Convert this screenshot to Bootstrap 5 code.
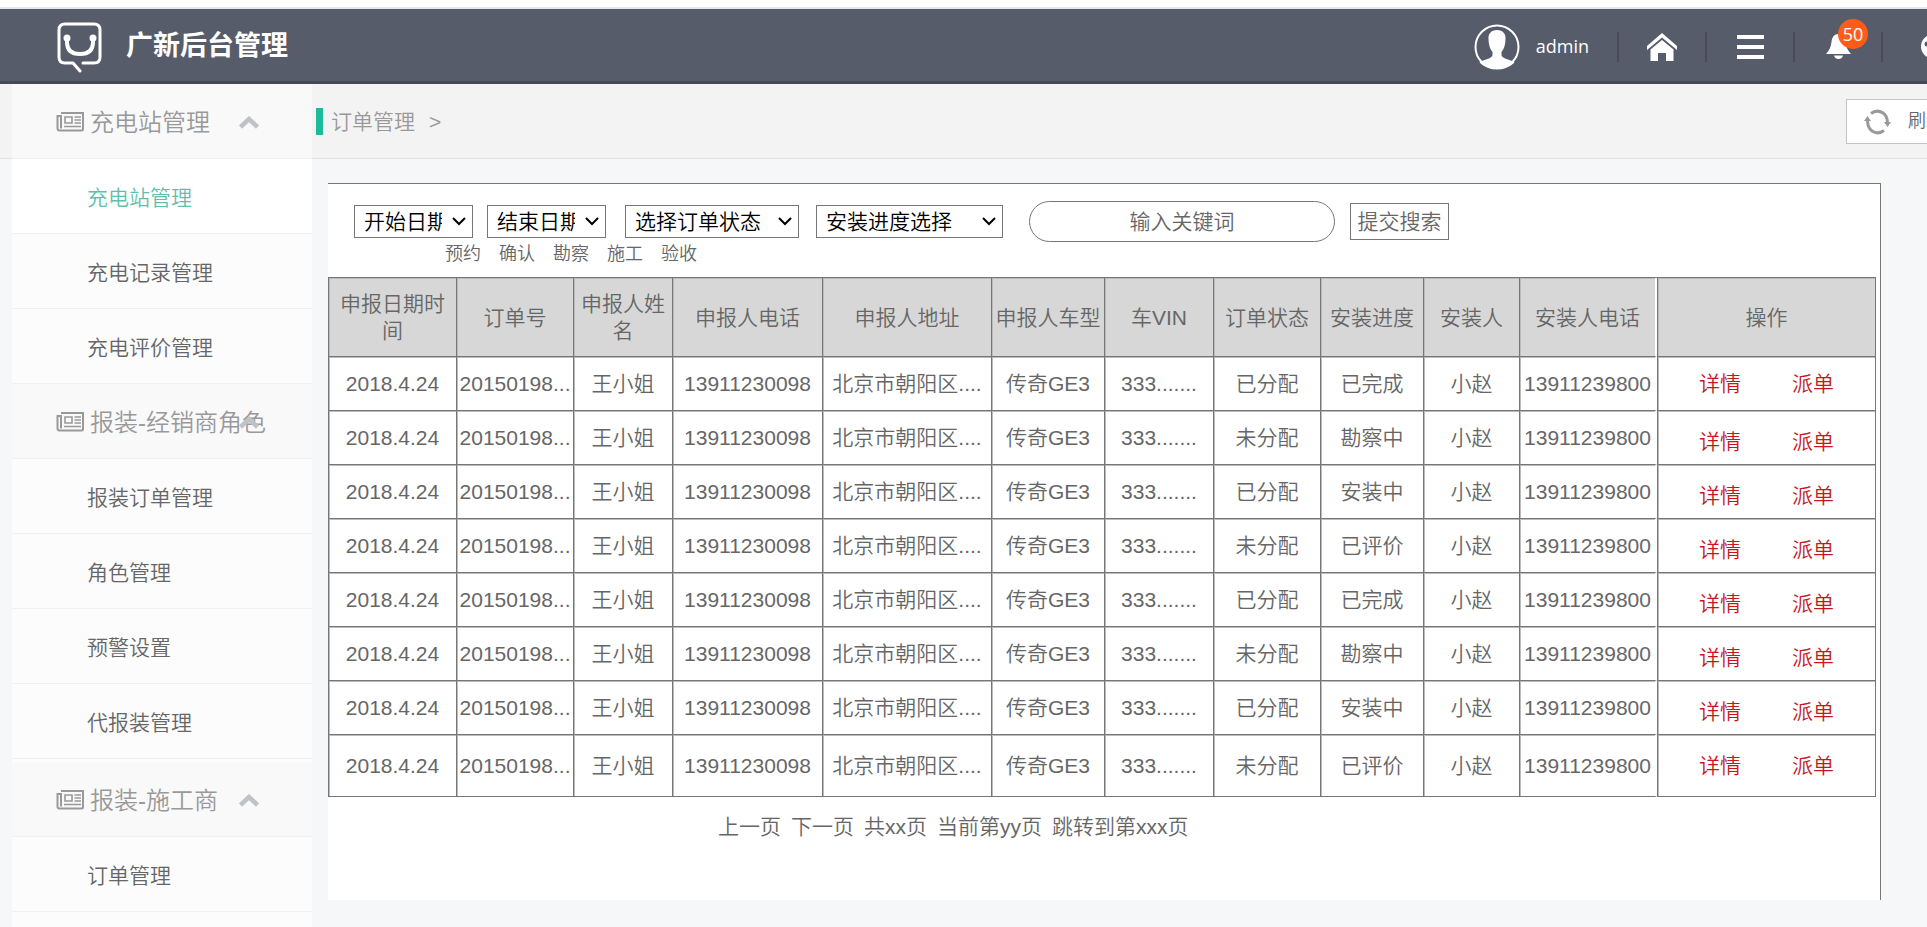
<!DOCTYPE html>
<html lang="zh-CN">
<head>
<meta charset="utf-8">
<meta name="viewport" content="width=device-width, initial-scale=1">
<title>广新后台管理</title>
<link href="https://cdn.jsdelivr.net/npm/bootstrap@5.3.0/dist/css/bootstrap.min.css" rel="stylesheet">
<style>
  body { font-family: "Liberation Sans", "Noto Sans CJK SC", sans-serif; font-weight: 350; font-size: 21px; line-height: 27px; color: #666; background: #f6f7f9; }
  a { color: inherit; text-decoration: none; }

  /* top bar */
  .page-edge { height: 9px; background: #fff; border-bottom: 2px solid #e6e8ed; }
  .topbar { height: 75px; padding-top: 3px; background: #575c6a; border-bottom: 3px solid #454956; color: #fff; }
  .brand-logo { margin-left: 56px; }
  .brand-name { font-size: 27px; font-weight: 700; margin-left: 23px; }
  .user-link { font-family: "Open Sans", "Noto Sans", sans-serif; font-weight: 400; font-size: 18px; gap: 16px; margin-right: 28px; }
  .tool { width: 88px; height: 30px; border-left: 2px solid #484b59; }
  .tool-last { width: 46px; padding-left: 37px; }
  .tool .count { left: 43px; top: -13px; width: 30px; height: 30px; border-radius: 50%; background: #ff5c1a; font-family: "Open Sans", "Noto Sans", sans-serif; font-weight: 400; font-size: 18px; line-height: 30px; }

  /* page body: crumb strip runs behind the sidebar */
  .shell { background: linear-gradient(#f3f3f3 74px, #e2e2e2 74px, #e2e2e2 75px, #f6f7f9 75px); padding-left: 12px; }
  .sidebar { width: 300px; background: #fcfcfc; }
  .side-group, .side-link { height: 75px; border-bottom: 1px solid #f0f0f0; padding-top: 2px; }
  .side-group { background: #f9f9f9; color: #999; font-size: 24px; padding-left: 44px; gap: 5px; border-radius: 0; }
  .side-group.spaced { margin-top: 3px; }
  .side-group .fold { right: 53px; top: 32px; }
  .side-link { padding-left: 75px; }
  .side-link.active { background: #fff; color: #5fbfab; }

  .crumbs { height: 75px; padding-left: 4px; color: #999; }
  .crumbs .accent { width: 7px; height: 27px; background: #1abc9c; margin-right: 8px; }
  .crumbs a { margin-right: 14px; }
  .refresh { width: 118px; height: 45px; margin-right: -37px; padding-left: 17px; gap: 17px; border: 1px solid #c4c4c4; background: #fff; color: #666; font-size: 18px; font-weight: 350; }

  .panel { margin: 24px 46px 27px 16px; background: #fff; border-top: 1px solid #767676; border-right: 1px solid #767676; }
  .filters { padding: 17px 26px 0; }
  .pick { appearance: none; height: 33px; border: 1px solid #767676; border-radius: 0; color: #000; font-weight: 350; padding: 0 30px 0 9px;
    background: #fff url("data:image/svg+xml,%3Csvg xmlns='http://www.w3.org/2000/svg' width='14' height='9'%3E%3Cpath d='M1 1l6 6 6-6' fill='none' stroke='%23000' stroke-width='2'/%3E%3C/svg%3E") no-repeat right 6px center; }
  .pick-date { width: 119px; margin-right: 14px; }
  .pick-state { width: 174px; margin: 0 17px 0 5px; }
  .pick-step { width: 187px; margin-right: 26px; }
  .keyword { width: 306px; height: 41px; border: 1px solid #767676; border-radius: 21px; text-align: center; color: #666; font-weight: 350; margin-right: 15px; }
  .keyword::placeholder { color: #666; opacity: 1; }
  .search { width: 99px; height: 37px; padding: 0; border: 1px solid #767676; background: #fff; color: #666; font-weight: 350; }
  .stages { padding-left: 117px; gap: 18px; font-size: 18px; line-height: 25px; }

  .orders { margin: 10px 6px 0 0; }
  .orders table { table-layout: fixed; border-collapse: separate; border-spacing: 0; border-top: 1px solid #767676; border-right: 1px solid #767676; }
  .orders th, .orders td { height: 54px; padding: 0; text-align: center; vertical-align: middle; font-weight: 350; white-space: nowrap; border-left: 1px solid #767676; border-bottom: 1px solid #767676; box-shadow: inset 1px 1px 0 #bbb; }
  .orders th { height: 79px; padding: 0 2px; background: #d7d7d7; white-space: normal; }
  .orders tr > :nth-child(11) { border-right: 2px solid #fff; }
  .orders tbody tr:last-child td { height: 62px; }
  .orders tbody tr:not(:first-child):not(:last-child) .acts { padding-top: 8px; }
  .acts a { color: #c8161d; }
  .acts a + a { margin-left: 51px; }
  .pager { gap: 10px; margin: 16px 0 0 390px; }
</style>
</head>
<body class="vh-100 overflow-hidden d-flex flex-column">

<div class="page-edge flex-shrink-0"></div>
<header class="topbar d-flex align-items-center flex-shrink-0">
  <svg class="brand-logo" width="47" height="52" viewBox="0 0 47 52" fill="none" stroke="#fff" stroke-width="3" stroke-linecap="round" stroke-linejoin="round" aria-hidden="true">
    <path d="M27 42H38Q44 42 44 36V9Q44 3 38 3H9Q3 3 3 9V36Q3 42 9 42H17L24 50"/>
    <path d="M11 17V21Q11 33 24 33Q37 33 37 21V17" stroke-width="4"/>
    <circle cx="11" cy="17" r="2"/><circle cx="37" cy="17" r="2"/>
  </svg>
  <span class="brand-name">广新后台管理</span>

  <nav class="d-flex align-items-center ms-auto" aria-label="工具">
    <a href="#" class="user-link d-flex align-items-center">
      <svg width="46" height="46" viewBox="0 0 46 46" aria-hidden="true">
        <circle cx="23" cy="23" r="21.500" fill="none" stroke="#fff" stroke-width="2"/>
        <path fill="#fff" d="M23 6c-6 0-9 4-8.500 9 .2 6 1.500 10 4 13v3c0 4-9 4-13 7.500C10 43 16 45 23 45s13-2 17.500-6.500C36.500 35 27.500 35 27.500 31v-3c2.500-3 3.800-7 4-13C32 10 29 6 23 6z"/>
      </svg>
      <span>admin</span>
    </a>
    <a href="#" class="tool d-flex align-items-center justify-content-center" aria-label="首页">
      <svg width="30" height="28" viewBox="0 0 30 28" fill="#fff"><path d="M15 0L0 13v4L15 4.500 30 17v-4z"/><path d="M15 7L3.500 16.500V28H11v-8h8v8h7.500V16.500z"/></svg>
    </a>
    <a href="#" class="tool d-flex align-items-center justify-content-center" aria-label="菜单">
      <svg width="27" height="24" viewBox="0 0 27 24" fill="#fff"><path d="M0 0h27v4H0zM0 10h27v4H0zM0 20h27v4H0z"/></svg>
    </a>
    <a href="#" class="tool position-relative d-flex align-items-center justify-content-center" aria-label="消息 50">
      <svg width="25" height="25" viewBox="0 0 25 25" fill="#fff"><path d="M12.500 0C7.500 0 6 4 5.500 8c-.5 5-2.500 9-5.500 12h25c-3-3-5-7-5.500-12-.5-4-2-8-7-8zM8 21.500h9c-.5 2-2 3.500-4.500 3.500S8.500 23.500 8 21.500z"/></svg>
      <span class="count position-absolute text-center">50</span>
    </a>
    <a href="#" class="tool tool-last overflow-hidden d-flex align-items-center" aria-label="主题">
      <svg class="flex-shrink-0" width="25" height="25" viewBox="0 0 25 25"><circle cx="13" cy="12.500" r="12" fill="#fff"/><circle cx="7" cy="10" r="2.500" fill="#575c6a"/><circle cx="15" cy="6" r="2" fill="#575c6a"/></svg>
    </a>
  </nav>
</header>

<div class="shell d-flex flex-grow-1 overflow-hidden">
  <nav class="sidebar flex-shrink-0 overflow-hidden" aria-label="主菜单">
    <a href="#" class="side-group position-relative d-flex align-items-center"><svg width="29" height="20" viewBox="0 0 29 20" fill="none" stroke="#999" stroke-width="2"><path d="M5 1H27V17Q27 18.500 25.500 18.500H3.500Q1.500 18.500 1.500 16V4H5V16.500"/><path d="M9 5h7v6H9zM18.500 5H25M18.500 8H25M18.500 11H25M8 14.500H25" stroke-width="1.600"/></svg><span>充电站管理</span><svg class="fold position-absolute" width="20" height="13" viewBox="0 0 20 13"><path d="M1.500 11L10 3l8.500 8" fill="none" stroke="#bfc3c7" stroke-width="4.500"/></svg></a>
    <a href="#" class="side-link active d-flex align-items-center">充电站管理</a>
    <a href="#" class="side-link d-flex align-items-center">充电记录管理</a>
    <a href="#" class="side-link d-flex align-items-center">充电评价管理</a>
    <a href="#" class="side-group position-relative d-flex align-items-center"><svg width="29" height="20" viewBox="0 0 29 20" fill="none" stroke="#999" stroke-width="2"><path d="M5 1H27V17Q27 18.500 25.500 18.500H3.500Q1.500 18.500 1.500 16V4H5V16.500"/><path d="M9 5h7v6H9zM18.500 5H25M18.500 8H25M18.500 11H25M8 14.500H25" stroke-width="1.600"/></svg><span>报装-经销商角色</span><svg class="fold position-absolute" width="20" height="13" viewBox="0 0 20 13"><path d="M1.500 11L10 3l8.500 8" fill="none" stroke="#bfc3c7" stroke-width="4.500"/></svg></a>
    <a href="#" class="side-link d-flex align-items-center">报装订单管理</a>
    <a href="#" class="side-link d-flex align-items-center">角色管理</a>
    <a href="#" class="side-link d-flex align-items-center">预警设置</a>
    <a href="#" class="side-link d-flex align-items-center">代报装管理</a>
    <a href="#" class="side-group spaced position-relative d-flex align-items-center"><svg width="29" height="20" viewBox="0 0 29 20" fill="none" stroke="#999" stroke-width="2"><path d="M5 1H27V17Q27 18.500 25.500 18.500H3.500Q1.500 18.500 1.500 16V4H5V16.500"/><path d="M9 5h7v6H9zM18.500 5H25M18.500 8H25M18.500 11H25M8 14.500H25" stroke-width="1.600"/></svg><span>报装-施工商</span><svg class="fold position-absolute" width="20" height="13" viewBox="0 0 20 13"><path d="M1.500 11L10 3l8.500 8" fill="none" stroke="#bfc3c7" stroke-width="4.500"/></svg></a>
    <a href="#" class="side-link d-flex align-items-center">订单管理</a>
  </nav>

  <main class="d-flex flex-column flex-grow-1 overflow-hidden">
    <div class="crumbs d-flex align-items-center flex-shrink-0">
      <span class="accent"></span>
      <a href="#">订单管理</a><span>&gt;</span>
      <button type="button" class="refresh d-flex align-items-center flex-shrink-0 ms-auto">
        <svg class="flex-shrink-0" width="27" height="26" viewBox="0 0 27 26" fill="none" stroke="#999" stroke-width="3"><path d="M7 4.500Q13 0 19 4Q23.500 7 23.500 14M20 21.500Q14 26 8 22Q3.500 19 3.500 11"/><path d="M20 13h7l-3.500 5zM0 12h7l-3.500-5z" fill="#999" stroke="none"/></svg>
        <span class="flex-shrink-0">刷新</span>
      </button>
    </div>

    <section class="panel flex-grow-1">
      <form class="filters d-flex align-items-center">
        <select class="pick pick-date" aria-label="开始日期"><option>开始日期</option></select>
        <select class="pick pick-date" aria-label="结束日期"><option>结束日期</option></select>
        <select class="pick pick-state" aria-label="订单状态"><option>选择订单状态</option></select>
        <select class="pick pick-step" aria-label="安装进度"><option>安装进度选择</option></select>
        <input class="keyword" type="text" placeholder="输入关键词" aria-label="关键词">
        <button type="submit" class="search">提交搜索</button>
      </form>
      <div class="stages d-flex"><span>预约</span><span>确认</span><span>勘察</span><span>施工</span><span>验收</span></div>

      <div class="orders">
        <table class="w-100">
          <colgroup><col width="128"><col width="117"><col width="99"><col width="150"><col width="169"><col width="113"><col width="109"><col width="107"><col width="103"><col width="96"><col width="138"><col width="218"></colgroup>
          <thead>
            <tr><th>申报日期时间</th><th>订单号</th><th>申报人姓名</th><th>申报人电话</th><th>申报人地址</th><th>申报人车型</th><th>车VIN</th><th>订单状态</th><th>安装进度</th><th>安装人</th><th>安装人电话</th><th>操作</th></tr>
          </thead>
          <tbody>
            <tr><td>2018.4.24</td><td>20150198...</td><td>王小姐</td><td>13911230098</td><td>北京市朝阳区....</td><td>传奇GE3</td><td>333.......</td><td>已分配</td><td>已完成</td><td>小赵</td><td>13911239800</td><td class="acts"><a href="#">详情</a><a href="#">派单</a></td></tr>
            <tr><td>2018.4.24</td><td>20150198...</td><td>王小姐</td><td>13911230098</td><td>北京市朝阳区....</td><td>传奇GE3</td><td>333.......</td><td>未分配</td><td>勘察中</td><td>小赵</td><td>13911239800</td><td class="acts"><a href="#">详情</a><a href="#">派单</a></td></tr>
            <tr><td>2018.4.24</td><td>20150198...</td><td>王小姐</td><td>13911230098</td><td>北京市朝阳区....</td><td>传奇GE3</td><td>333.......</td><td>已分配</td><td>安装中</td><td>小赵</td><td>13911239800</td><td class="acts"><a href="#">详情</a><a href="#">派单</a></td></tr>
            <tr><td>2018.4.24</td><td>20150198...</td><td>王小姐</td><td>13911230098</td><td>北京市朝阳区....</td><td>传奇GE3</td><td>333.......</td><td>未分配</td><td>已评价</td><td>小赵</td><td>13911239800</td><td class="acts"><a href="#">详情</a><a href="#">派单</a></td></tr>
            <tr><td>2018.4.24</td><td>20150198...</td><td>王小姐</td><td>13911230098</td><td>北京市朝阳区....</td><td>传奇GE3</td><td>333.......</td><td>已分配</td><td>已完成</td><td>小赵</td><td>13911239800</td><td class="acts"><a href="#">详情</a><a href="#">派单</a></td></tr>
            <tr><td>2018.4.24</td><td>20150198...</td><td>王小姐</td><td>13911230098</td><td>北京市朝阳区....</td><td>传奇GE3</td><td>333.......</td><td>未分配</td><td>勘察中</td><td>小赵</td><td>13911239800</td><td class="acts"><a href="#">详情</a><a href="#">派单</a></td></tr>
            <tr><td>2018.4.24</td><td>20150198...</td><td>王小姐</td><td>13911230098</td><td>北京市朝阳区....</td><td>传奇GE3</td><td>333.......</td><td>已分配</td><td>安装中</td><td>小赵</td><td>13911239800</td><td class="acts"><a href="#">详情</a><a href="#">派单</a></td></tr>
            <tr><td>2018.4.24</td><td>20150198...</td><td>王小姐</td><td>13911230098</td><td>北京市朝阳区....</td><td>传奇GE3</td><td>333.......</td><td>未分配</td><td>已评价</td><td>小赵</td><td>13911239800</td><td class="acts"><a href="#">详情</a><a href="#">派单</a></td></tr>
          </tbody>
        </table>
      </div>

      <div class="pager d-flex"><a href="#">上一页</a><a href="#">下一页</a><span>共xx页</span><span>当前第yy页</span><span>跳转到第xxx页</span></div>
    </section>
  </main>
</div>

<script src="https://cdn.jsdelivr.net/npm/bootstrap@5.3.0/dist/js/bootstrap.bundle.min.js"></script>
</body>
</html>
